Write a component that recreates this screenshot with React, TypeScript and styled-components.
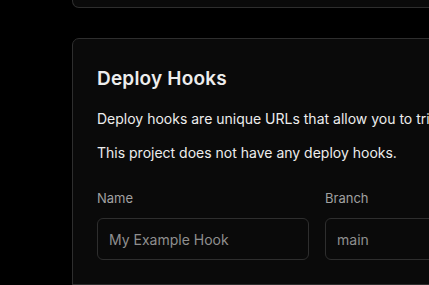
import React from 'react';
import styled, { createGlobalStyle } from 'styled-components';

const GlobalStyle = createGlobalStyle`
  html, body {
    margin: 0;
    padding: 0;
    background: #000;
    overflow: hidden;
  }
  body {
    font-family: Inter, "Noto Sans", "Liberation Sans", sans-serif;
    color: #ededed;
    -webkit-font-smoothing: antialiased;
  }
`;

const Page = styled.div`
  display: flex;
  flex-direction: column;
  gap: 30px;
  padding-left: 72px;
  width: 640px;
`;

const PrevCard = styled.div`
  height: 7px;
  border: 1px solid #2e2e2e;
  border-top: none;
  border-radius: 0 0 7px 7px;
  background: #0a0a0a;
`;

const Card = styled.section`
  border: 1px solid #2e2e2e;
  border-radius: 7px;
  background: #0a0a0a;
`;

const CardBody = styled.div`
  padding: 24px;
  display: flex;
  flex-direction: column;
`;

const Title = styled.h2`
  margin: 0 0 14px;
  font-size: 19px;
  line-height: 32px;
  font-weight: 600;
  letter-spacing: 0.2px;
  color: #ededed;
`;

const Text = styled.p`
  margin: 0 0 14px;
  font-size: 14px;
  line-height: 20px;
  color: #ededed;
  white-space: nowrap;
`;

const Fields = styled.div`
  display: grid;
  grid-template-columns: 212px 212px;
  gap: 16px;
  margin-top: 11px;
`;

const Field = styled.label`
  display: flex;
  flex-direction: column;
  gap: 10px;
`;

const Label = styled.span`
  font-size: 13px;
  line-height: 20px;
  color: #a1a1a1;
`;

const Input = styled.input`
  box-sizing: border-box;
  height: 42px;
  padding: 0 11px;
  border: 1px solid #2e2e2e;
  border-radius: 6px;
  background: #0a0a0a;
  font-family: inherit;
  font-size: 14px;
  color: #ededed;
  outline: none;
  &::placeholder {
    color: #8f8f8f;
  }
`;

const CardFooter = styled.div`
  height: 56px;
  border-top: 1px solid #2e2e2e;
`;

export default function App() {
  return (
    <>
      <GlobalStyle />
      <Page>
        <PrevCard />
        <Card>
          <CardBody>
            <Title>Deploy Hooks</Title>
            <Text>Deploy hooks are unique URLs that allow you to trigger a deployment of a given branch.</Text>
            <Text>This project does not have any deploy hooks.</Text>
            <Fields>
              <Field>
                <Label>Name</Label>
                <Input placeholder="My Example Hook" />
              </Field>
              <Field>
                <Label>Branch</Label>
                <Input placeholder="main" />
              </Field>
            </Fields>
          </CardBody>
          <CardFooter />
        </Card>
      </Page>
    </>
  );
}
